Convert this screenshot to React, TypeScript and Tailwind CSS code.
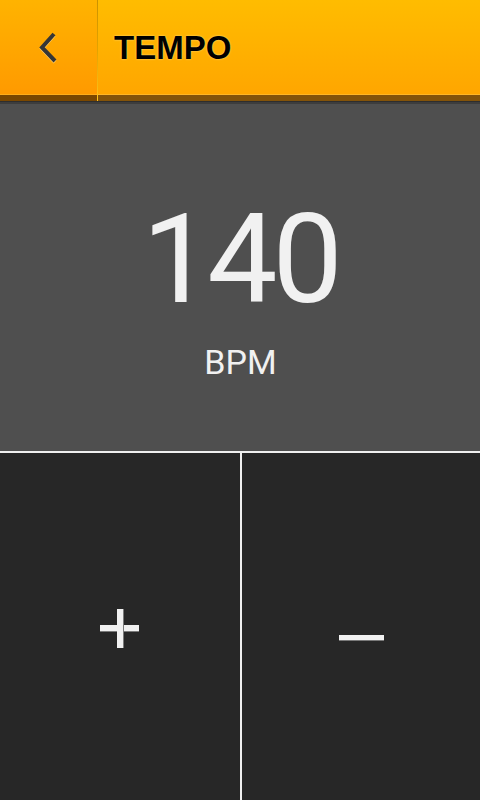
export default function App() {
  return (
    <div className="flex h-[800px] w-[480px] flex-col overflow-hidden bg-[#272727] font-['Roboto',sans-serif]">
      {/* action bar */}
      <header className="flex h-[101px] shrink-0">
        <button
          type="button"
          aria-label="Back"
          className="flex w-[97px] flex-col"
        >
          <span className="flex h-[94px] items-center bg-gradient-to-b from-[#ffb300] to-[#ff9a00] pl-[38px]">
            <svg width="22" height="32" viewBox="0 0 22 32" className="drop-shadow-[0_1px_0_rgba(255,220,140,0.7)]">
              <polyline
                points="16,3 4,16.5 17,30"
                fill="none"
                stroke="#363636"
                strokeWidth="4"
              />
            </svg>
          </span>
          <span className="h-px bg-[#ffad1a]" />
          <span className="h-[6px] bg-[#7a4700]" />
        </button>
        <span className="w-px bg-gradient-to-b from-[#c99200] via-[#e3a300] to-[#ffc21a]" />
        <div className="flex flex-1 flex-col">
          <div className="flex h-[94px] items-center bg-gradient-to-b from-[#ffbc00] to-[#ffa600] pl-[16px]">
            <h1 className="font-['Liberation_Sans',Arial,sans-serif] text-[33px] font-bold leading-none text-black [text-shadow:0_0_2px_rgba(255,232,150,0.9)]">
              TEMPO
            </h1>
          </div>
          <span className="h-px bg-[#ffb626]" />
          <span className="h-[6px] bg-[#83530a]" />
        </div>
      </header>
      <div className="h-px shrink-0 bg-[#2e2e2e]" />
      <div className="h-[2px] shrink-0 bg-[#3d3d3d]" />

      {/* tempo readout */}
      <section className="flex h-[347px] shrink-0 flex-col items-center bg-[#4f4f4f] pt-[93px]">
        <p className="text-[125px] leading-none tracking-[-5px] text-[#f1f1f1]">140</p>
        <p className="mt-[23px] pl-[1px] text-[34px] leading-none text-[#f1f1f1]">BPM</p>
      </section>

      <div className="h-[2px] shrink-0 bg-[#f0f0f0]" />

      {/* controls */}
      <div className="flex flex-1">
        <button
          type="button"
          aria-label="Increase tempo"
          className="flex flex-1 items-center justify-center pt-[4px] pr-[2px]"
        >
          <span className="relative size-[39px]">
            <span className="absolute top-[16px] left-0 h-[6px] w-[39px] bg-[#f1f1f1] shadow-[0_1px_0_#7a7a7a]" />
            <span className="absolute top-0 left-[17px] h-[39px] w-[6px] bg-[#f1f1f1] shadow-[1px_0_0_#7a7a7a]" />
          </span>
        </button>
        <span className="w-[2px] bg-[#f0f0f0]" />
        <button
          type="button"
          aria-label="Decrease tempo"
          className="flex flex-1 items-center justify-center pt-[21px]"
        >
          <span className="h-[5px] w-[45px] bg-[#f1f1f1] shadow-[0_1px_0_#7a7a7a]" />
        </button>
      </div>
    </div>
  )
}
